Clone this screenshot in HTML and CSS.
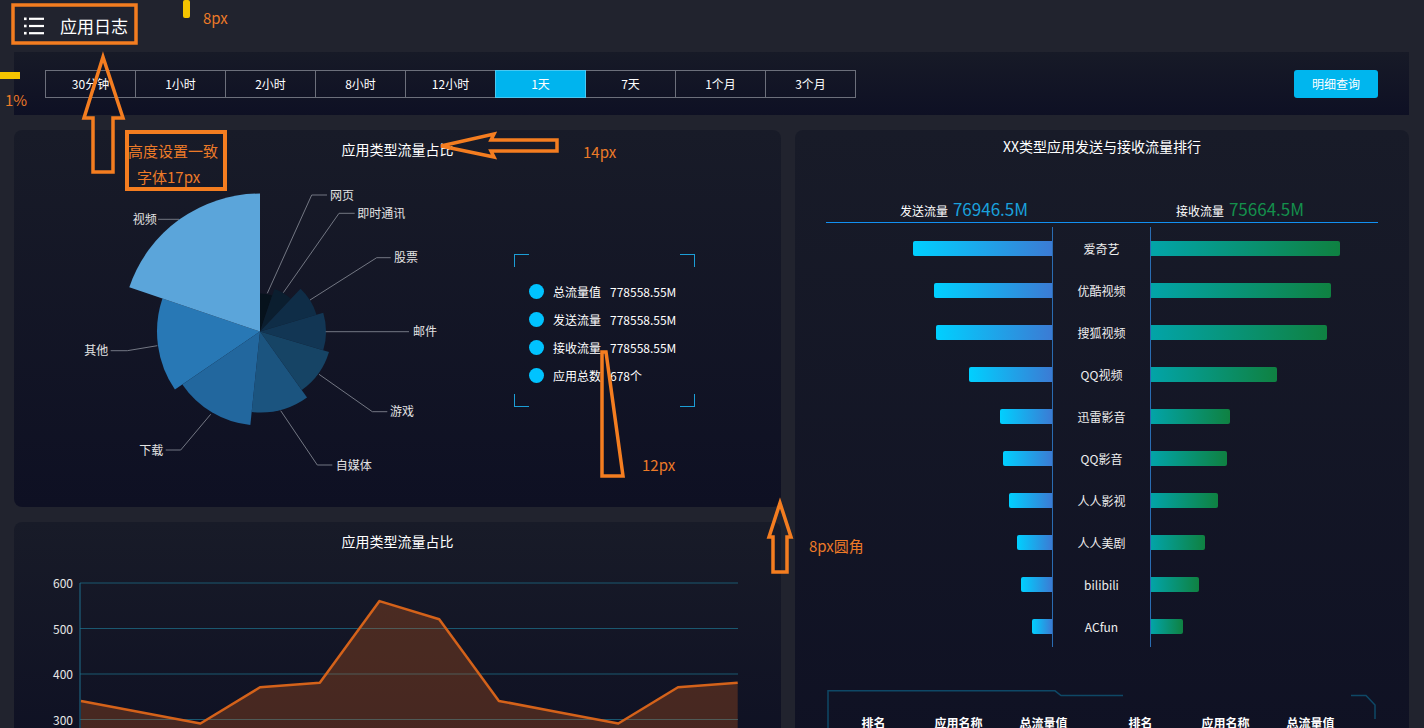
FILE: index.html
```html
<!DOCTYPE html>
<html lang="zh-CN">
<head>
<meta charset="utf-8">
<title>应用日志</title>
<link rel="stylesheet" href="styles.css">
</head>
<body>
<header class="topbar">
  <svg class="menu-icon" viewBox="0 0 20 18" width="20" height="18">
    <g fill="#ffffff">
      <rect x="0" y="0.5" width="2.6" height="2.6"/><rect x="5" y="0.7" width="15" height="2.2"/>
      <rect x="0" y="7.7" width="2.6" height="2.6"/><rect x="5" y="7.9" width="15" height="2.2"/>
      <rect x="0" y="14.9" width="2.6" height="2.6"/><rect x="5" y="15.1" width="15" height="2.2"/>
    </g>
  </svg>
  <span class="page-title">应用日志</span>
</header>

<div class="toolbar">
  <div class="tabs">
    <button class="tab">30分钟</button>
    <button class="tab">1小时</button>
    <button class="tab">2小时</button>
    <button class="tab">8小时</button>
    <button class="tab">12小时</button>
    <button class="tab active">1天</button>
    <button class="tab">7天</button>
    <button class="tab">1个月</button>
    <button class="tab">3个月</button>
  </div>
  <button class="query-btn">明细查询</button>
</div>

<main class="main">
  <div class="col-left">
    <section class="panel pie-panel">
      <h3 class="panel-title">应用类型流量占比</h3>
      <div class="pie-body">
        <svg class="pie-chart" viewBox="0 0 480 348" width="480" height="348">
          <g class="sectors">
            <path fill="#06121c" d="M246 172.5 L246 134.5 A38 38 0 0 1 258.18 136.51 Z"/>
            <path fill="#0b1e2f" d="M246 172.5 L260.43 129.88 A45 45 0 0 1 276.92 139.8 Z"/>
            <path fill="#0f2d47" d="M246 172.5 L286.54 129.63 A59 59 0 0 1 302.54 155.64 Z"/>
            <path fill="#123654" d="M246 172.5 L309.25 153.64 A66 66 0 0 1 309.25 191.36 Z"/>
            <path fill="#164465" d="M246 172.5 L315 193.07 A72 72 0 0 1 287.81 231.12 Z"/>
            <path fill="#1b547f" d="M246 172.5 L293.04 238.44 A81 81 0 0 1 237.67 253.07 Z"/>
            <path fill="#22679e" d="M246 172.5 L236.34 266 A94 94 0 0 1 168.35 225.47 Z"/>
            <path fill="#2878b5" d="M246 172.5 L160.91 230.54 A103 103 0 0 1 148.44 139.48 Z"/>
            <path fill="#5ba5da" d="M246 172.5 L115.29 128.26 A138 138 0 0 1 246 34.5 Z"/>
          </g>
          <g class="leaders" fill="none" stroke="#737783" stroke-width="1">
            <polyline points="253.3,134.3 297.7,36 313,36"/>
            <polyline points="269.3,133.7 325,54.3 340.7,54.3"/>
            <polyline points="296,141 362.7,98.7 376.7,98.7"/>
            <polyline points="311.7,172.7 395,172.7"/>
            <polyline points="305,215.3 358.3,252.7 373.3,252.7"/>
            <polyline points="266.7,251.7 303.3,306 318.3,306"/>
            <polyline points="196.7,255.3 166.7,291 151.7,291"/>
            <polyline points="143.3,186.7 113.3,191.7 96.7,191.7"/>
            <polyline points="165,60.3 144,60.3"/>
          </g>
          <g class="pie-labels">
            <text x="316" y="35">网页</text>
            <text x="343.3" y="53.3">即时通讯</text>
            <text x="380" y="97.7">股票</text>
            <text x="399" y="171.7">邮件</text>
            <text x="376" y="251.7">游戏</text>
            <text x="321.7" y="305">自媒体</text>
            <text x="149.3" y="290" text-anchor="end">下载</text>
            <text x="94.3" y="190.7" text-anchor="end">其他</text>
            <text x="142.7" y="59.3" text-anchor="end">视频</text>
          </g>
        </svg>
        <div class="legend-box">
          <span class="corner tl"></span><span class="corner tr"></span>
          <span class="corner bl"></span><span class="corner br"></span>
          <div class="legend-item"><i class="dot"></i><span class="legend-label">总流量值</span><span>778558.55M</span></div>
          <div class="legend-item"><i class="dot"></i><span class="legend-label">发送流量</span><span>778558.55M</span></div>
          <div class="legend-item"><i class="dot"></i><span class="legend-label">接收流量</span><span>778558.55M</span></div>
          <div class="legend-item"><i class="dot"></i><span class="legend-label">应用总数</span><span>678个</span></div>
        </div>
      </div>
    </section>

    <section class="panel line-panel">
      <h3 class="panel-title">应用类型流量占比</h3>
      <svg class="line-chart" viewBox="0 0 767 200" width="767" height="200">
        <g class="grid" stroke="#1b5870" stroke-width="1">
          <line x1="66" y1="32" x2="724" y2="32"/>
          <line x1="66" y1="77.5" x2="724" y2="77.5"/>
          <line x1="66" y1="123" x2="724" y2="123"/>
          <line x1="66" y1="168.5" x2="724" y2="168.5"/>
          <line x1="66" y1="32" x2="66" y2="200" stroke="#1f6f8c"/>
        </g>
        <g class="axis-labels">
          <text x="59" y="31.5">600</text>
          <text x="59" y="77">500</text>
          <text x="59" y="122.5">400</text>
          <text x="59" y="168">300</text>
        </g>
        <polygon fill="rgba(214,98,26,0.28)" points="67,200 67,149.9 126.7,161.2 186.4,172.5 246,136.3 305.8,131.7 365.5,50.1 425.2,68.3 484.9,149.9 544.6,161.2 604.3,172.5 664,136.3 723.7,131.7 723.7,200"/>
        <polyline fill="none" stroke="#d4621a" stroke-width="2.5" stroke-linejoin="round" points="67,149.9 126.7,161.2 186.4,172.5 246,136.3 305.8,131.7 365.5,50.1 425.2,68.3 484.9,149.9 544.6,161.2 604.3,172.5 664,136.3 723.7,131.7"/>
      </svg>
    </section>
  </div>

  <section class="panel rank-panel">
    <h3 class="rank-title">XX类型应用发送与接收流量排行</h3>
    <div class="summary">
      <div class="summary-half"><span class="sum-label">发送流量</span><span class="sum-value send">76946.5M</span></div>
      <div class="summary-half"><span class="sum-label">接收流量</span><span class="sum-value recv">75664.5M</span></div>
    </div>
    <div class="rank-chart">
      <div class="rank-row"><div class="bar-cell left"><i class="bar send-bar" style="width:139px"></i></div><div class="rank-name">爱奇艺</div><div class="bar-cell right"><i class="bar recv-bar" style="width:189px"></i></div></div>
      <div class="rank-row"><div class="bar-cell left"><i class="bar send-bar" style="width:118px"></i></div><div class="rank-name">优酷视频</div><div class="bar-cell right"><i class="bar recv-bar" style="width:180px"></i></div></div>
      <div class="rank-row"><div class="bar-cell left"><i class="bar send-bar" style="width:116px"></i></div><div class="rank-name">搜狐视频</div><div class="bar-cell right"><i class="bar recv-bar" style="width:176px"></i></div></div>
      <div class="rank-row"><div class="bar-cell left"><i class="bar send-bar" style="width:83px"></i></div><div class="rank-name">QQ视频</div><div class="bar-cell right"><i class="bar recv-bar" style="width:126px"></i></div></div>
      <div class="rank-row"><div class="bar-cell left"><i class="bar send-bar" style="width:52px"></i></div><div class="rank-name">迅雷影音</div><div class="bar-cell right"><i class="bar recv-bar" style="width:79px"></i></div></div>
      <div class="rank-row"><div class="bar-cell left"><i class="bar send-bar" style="width:49px"></i></div><div class="rank-name">QQ影音</div><div class="bar-cell right"><i class="bar recv-bar" style="width:76px"></i></div></div>
      <div class="rank-row"><div class="bar-cell left"><i class="bar send-bar" style="width:43px"></i></div><div class="rank-name">人人影视</div><div class="bar-cell right"><i class="bar recv-bar" style="width:67px"></i></div></div>
      <div class="rank-row"><div class="bar-cell left"><i class="bar send-bar" style="width:35px"></i></div><div class="rank-name">人人美剧</div><div class="bar-cell right"><i class="bar recv-bar" style="width:54px"></i></div></div>
      <div class="rank-row"><div class="bar-cell left"><i class="bar send-bar" style="width:31px"></i></div><div class="rank-name">bilibili</div><div class="bar-cell right"><i class="bar recv-bar" style="width:48px"></i></div></div>
      <div class="rank-row"><div class="bar-cell left"><i class="bar send-bar" style="width:20px"></i></div><div class="rank-name">ACfun</div><div class="bar-cell right"><i class="bar recv-bar" style="width:32px"></i></div></div>
    </div>
    <div class="rank-table">
      <svg class="table-frame" viewBox="0 0 552 60" width="552" height="60">
        <polyline fill="none" stroke="#0e4866" stroke-width="1.5" points="2,60 2,0.8 229,0.8 235,5.5 297,5.5"/>
        <polyline fill="none" stroke="#0e4866" stroke-width="1.5" points="525,5.5 540,5.5 549,15 549,29"/>
      </svg>
      <div class="table-head">
        <div class="head-group"><span>排名</span><span>应用名称</span><span>总流量值</span></div>
        <div class="head-group"><span>排名</span><span>应用名称</span><span>总流量值</span></div>
      </div>
    </div>
  </section>
</main>

<svg class="annotations" viewBox="0 0 1424 728" width="1424" height="728">
  <g fill="none" stroke="#f47d20" stroke-width="3.5" stroke-linejoin="miter">
    <rect x="13" y="5" width="123" height="38"/>
    <polygon points="103,57 123,118 113,118 113,172 93,172 93,118 84,118"/>
    <rect x="127" y="132" width="98" height="57" stroke-width="4"/>
    <polygon points="441,146 494,134 491,140 557,140 557,151 491,151 494,157"/>
    <polygon points="602,352 606,352 623,476 602,476"/>
    <polygon points="780,503 791,537 787,537 787,572 773,572 773,537 769,537"/>
  </g>
  <rect x="183" y="0" width="7" height="18" rx="2" fill="#f5c400"/>
  <rect x="0" y="72" width="20" height="7" fill="#f5c400"/>
  <g class="note-text">
    <text x="203" y="24">8px</text>
    <text x="5" y="106">1%</text>
    <text x="128" y="157">高度设置一致</text>
    <text x="137" y="183">字体17px</text>
    <text x="583" y="158">14px</text>
    <text x="642" y="471">12px</text>
    <text x="809" y="552">8px圆角</text>
  </g>
</svg>
</body>
</html>
```

FILE: styles.css
```css
* {
  box-sizing: border-box;
  margin: 0;
  padding: 0;
}

html,
body {
  width: 1424px;
  height: 728px;
  overflow: hidden;
}

body {
  position: relative;
  background: #21232e;
  color: #ffffff;
  font-family: "Noto Sans CJK SC", "Microsoft YaHei", "Liberation Sans", sans-serif;
}

/* ---------- header ---------- */
.topbar {
  height: 52px;
  display: flex;
  align-items: center;
  gap: 16px;
  padding-left: 24px;
}

.menu-icon {
  display: block;
}

.page-title {
  font-size: 17px;
  line-height: 20px;
  font-weight: 400;
}

/* ---------- toolbar ---------- */
.toolbar {
  height: 63px;
  margin: 0 15px 0 14px;
  padding: 0 31px;
  display: flex;
  align-items: center;
  justify-content: space-between;
  background: linear-gradient(#171a27, #0e1024);
}

.tabs {
  display: flex;
}

.tab {
  width: 91px;
  height: 28px;
  margin-left: -1px;
  border: 1px solid #6c6f7b;
  background: transparent;
  color: #ffffff;
  font: 12px/26px "Noto Sans CJK SC", "Microsoft YaHei", sans-serif;
  text-align: center;
}

.tab:first-child {
  margin-left: 0;
}

.tab.active {
  position: relative;
  z-index: 1;
  background: #00b4ee;
  border-color: #48c8f2;
}

.query-btn {
  width: 84px;
  height: 28px;
  border: none;
  border-radius: 3px;
  background: #00b6ee;
  color: #ffffff;
  font: 12px/28px "Noto Sans CJK SC", "Microsoft YaHei", sans-serif;
}

/* ---------- layout ---------- */
.main {
  display: grid;
  grid-template-columns: 767px 614px;
  column-gap: 14px;
  margin: 15px 0 0 14px;
}

.col-left {
  display: flex;
  flex-direction: column;
  gap: 15px;
}

.panel {
  border-radius: 8px;
  background: linear-gradient(#181b28, #0e1023);
}

.panel-title {
  padding-top: 9px;
  font-size: 14px;
  line-height: 20px;
  font-weight: 400;
  text-align: center;
}

/* ---------- pie panel ---------- */
.pie-panel {
  height: 377px;
}

.pie-body {
  display: flex;
  align-items: flex-start;
}

.pie-chart {
  display: block;
  flex: none;
}

.pie-labels text {
  fill: #e2e2e2;
  font-size: 12px;
  dominant-baseline: central;
}

.legend-box {
  position: relative;
  width: 181px;
  height: 153px;
  margin: 95px 0 0 20px;
  padding: 23px 0 0 15px;
}

.corner {
  position: absolute;
  width: 15px;
  height: 13px;
  border-color: #1c9ed6;
  border-style: solid;
  border-width: 0;
}

.corner.tl { left: 0; top: 0; border-left-width: 1.5px; border-top-width: 1.5px; }
.corner.tr { right: 0; top: 0; border-right-width: 1.5px; border-top-width: 1.5px; }
.corner.bl { left: 0; bottom: 0; border-left-width: 1.5px; border-bottom-width: 1.5px; }
.corner.br { right: 0; bottom: 0; border-right-width: 1.5px; border-bottom-width: 1.5px; }

.legend-item {
  height: 28px;
  display: flex;
  align-items: center;
  font-size: 12px;
  color: #ffffff;
}

.dot {
  width: 15px;
  height: 15px;
  margin-right: 9px;
  border-radius: 50%;
  background: #00c3ff;
  flex: none;
}

.legend-label {
  width: 57px;
  flex: none;
}

/* ---------- line panel ---------- */
.line-panel {
  height: 240px;
}

.line-chart {
  display: block;
}

.axis-labels text {
  fill: #e6e6e6;
  font-size: 12px;
  text-anchor: end;
  dominant-baseline: central;
}

/* ---------- rank panel ---------- */
.rank-panel {
  height: 700px;
  padding: 0 31px;
  display: flex;
  flex-direction: column;
}

.rank-panel > * {
  flex: none;
}

.rank-title {
  padding-top: 6px;
  font-size: 14px;
  line-height: 20px;
  font-weight: 400;
  text-align: center;
}

.summary {
  height: 67px;
  display: flex;
  align-items: flex-end;
  padding-bottom: 3px;
  border-bottom: 1px solid #1290f2;
}

.summary-half {
  flex: 1;
  display: flex;
  justify-content: center;
  align-items: baseline;
  gap: 5px;
}

.sum-label {
  font-size: 12px;
}

.sum-value {
  font-size: 17px;
  line-height: 20px;
}

.sum-value.send {
  color: #1aa1dc;
}

.sum-value.recv {
  color: #14904c;
}

.rank-chart {
  margin-top: 4px;
}

.rank-row {
  height: 42px;
  display: grid;
  grid-template-columns: 226px 99px 1fr;
}

.bar-cell {
  display: flex;
  align-items: center;
}

.bar-cell.left {
  justify-content: flex-end;
}

.bar-cell.right {
  justify-content: flex-start;
}

.bar {
  display: block;
  height: 15px;
}

.send-bar {
  border-radius: 2px 0 0 2px;
  background: linear-gradient(90deg, #00d0ff, #3b7bd4);
}

.recv-bar {
  border-radius: 0 2px 2px 0;
  background: linear-gradient(90deg, #02a4a8, #0f8141);
}

.rank-name {
  border-left: 1px solid #2a6cb2;
  border-right: 1px solid #2a6cb2;
  display: flex;
  align-items: center;
  justify-content: center;
  font-size: 12px;
  color: #eeeeee;
}

.rank-table {
  position: relative;
  margin-top: 43px;
  height: 80px;
  padding: 23px 0 0 5px;
}

.table-frame {
  position: absolute;
  left: 0;
  top: 0;
}

.table-head {
  position: relative;
  display: flex;
  gap: 12px;
}

.head-group {
  display: grid;
  grid-template-columns: repeat(3, 85px);
}

.head-group span {
  text-align: center;
  font-size: 12px;
  line-height: 20px;
  font-weight: 700;
}

/* ---------- annotation overlay ---------- */
.annotations {
  position: absolute;
  left: 0;
  top: 0;
  pointer-events: none;
}

.note-text text {
  fill: #ec7a28;
  font-size: 15px;
  font-family: "Noto Sans CJK SC", "Microsoft YaHei", sans-serif;
}
```
